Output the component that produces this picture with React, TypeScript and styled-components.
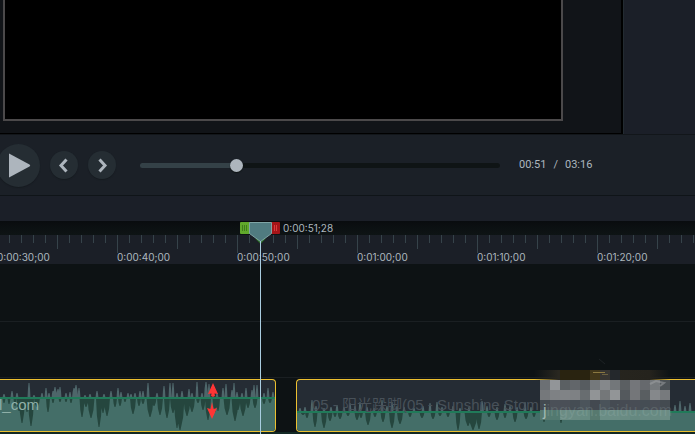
import React, { useState } from "react";
import styled, { createGlobalStyle } from "styled-components";

const GlobalStyle = createGlobalStyle`
  *, *::before, *::after { box-sizing: border-box; }
  body { margin: 0; background: #0d1214; overflow: hidden; }
`;

const Editor = styled.div`
  display: flex;
  flex-direction: column;
  height: 100vh;
  overflow: hidden;
  color: #adb7bf;
  background: #1b1f27;
  font-family: Inter, "Liberation Sans", sans-serif;
`;

const Stage = styled.section`
  display: grid;
  grid-template-columns: 1fr 72px;
`;

const Preview = styled.div`
  display: flex;
  padding: 0 58px 12px 3px;
  background: #111418;
  border-right: 2px solid #000;
  border-bottom: 1px solid #000;
`;

const Canvas = styled.div`
  flex: 1;
  height: 121px;
  background: #000;
  border: 2px solid #4b494a;
  border-top: 0;
`;

const Properties = styled.aside`
  background: #1b1f28;
  border-left: 1px solid #232b31;
`;

const Transport = styled.section`
  display: flex;
  align-items: center;
  height: 62px;
  background: #1b2027;
  border-top: 1px solid #12161a;
  border-bottom: 1px solid #0f1418;
`;

const RoundButton = styled.button<{ $size: number }>`
  display: grid;
  place-items: center;
  flex: none;
  width: ${(p) => p.$size}px;
  height: ${(p) => p.$size}px;
  padding: 0;
  border: 0;
  border-radius: 50%;
  background: #252d33;
  box-shadow: 0 1px 1px #161b20;
  cursor: pointer;
`;

const Buttons = styled.div`
  display: flex;
  align-items: center;
  gap: 10px;
  margin-left: -3px;
`;

const Scrubber = styled.input<{ $fill: number }>`
  appearance: none;
  flex: 1;
  min-width: 0;
  height: 13px;
  margin: 0 19px 0 24px;
  background: transparent;
  cursor: pointer;

  &::-webkit-slider-runnable-track {
    height: 5px;
    border-radius: 3px;
    background: linear-gradient(
      to right,
      #344147 ${(p) => p.$fill}%,
      #0f1415 ${(p) => p.$fill}%
    );
  }

  &::-webkit-slider-thumb {
    appearance: none;
    width: 13px;
    height: 13px;
    margin-top: -4px;
    border: 0;
    border-radius: 50%;
    background: #adb5bd;
    box-shadow: 0 1px 1px #0f1415;
  }
`;

const Clock = styled.div`
  display: flex;
  gap: 7px;
  width: 176px;
  font: 11px/16px Roboto, sans-serif;
`;

const Toolbar = styled.div`
  height: 25px;
  background: #1b1f28;
`;

const Timeline = styled.section`
  position: relative;
  display: flex;
  flex-direction: column;
  flex: 1;
  background: #0d1214;
`;

const ScrubLane = styled.div`
  height: 14px;
  background: linear-gradient(#090c0f, #0e1415);
`;

const Ruler = styled.div`
  display: flex;
  height: 29px;
  margin: 0 0 2px -3px;
  overflow: hidden;
  background: #1b1f27;
`;

const Segment = styled.div`
  position: relative;
  display: flex;
  flex: none;
  width: 120px;
`;

const Tick = styled.i<{ $length: number }>`
  width: 12px;
  height: ${(p) => p.$length}px;
  border-left: 1px solid #36434a;
`;

const Timecode = styled.span`
  font-size: 10px;
  line-height: 12px;
  white-space: nowrap;
`;

const SegmentLabel = styled(Timecode)`
  position: absolute;
  left: 0;
  bottom: 1px;
`;

const EmptyTrack = styled.div`
  height: 56px;
  border-bottom: 1px solid #1a1f22;
`;

const AudioTrack = styled.div`
  position: relative;
  display: flex;
  gap: 20px;
  flex: 1;
  align-items: flex-start;
  padding-top: 1px;
  background: linear-gradient(#0d1214 54px, #132824 54px);
`;

const Clip = styled.div<{ $first?: boolean }>`
  position: relative;
  flex: ${(p) => (p.$first ? "none" : "1")};
  width: ${(p) => (p.$first ? "276px" : "auto")};
  height: 53px;
  overflow: hidden;
  border: 1px solid #ecc030;
  border-left-width: ${(p) => (p.$first ? 0 : 1)}px;
  border-right-width: ${(p) => (p.$first ? 1 : 0)}px;
  border-radius: ${(p) => (p.$first ? "0 4px 4px 0" : "4px 0 0 4px")};
  background: #252c34;
`;

const Wave = styled.svg`
  display: block;
  width: 100%;
  height: 51px;
`;

const ClipName = styled.span<{ $inset: number; $tone: string }>`
  position: absolute;
  left: ${(p) => p.$inset}px;
  top: 16px;
  color: ${(p) => p.$tone};
  font: 15px/18px "Liberation Sans", "Noto Sans CJK SC", sans-serif;
  white-space: nowrap;
`;

const Arrows = styled.svg`
  position: absolute;
  left: 206px;
  top: 3px;
`;

const Censor = styled.svg`
  position: absolute;
  left: 530px;
  top: -20px;
  font: 16px "Liberation Sans", sans-serif;
`;

const Playhead = styled.div`
  position: absolute;
  top: 1px;
  bottom: 0;
  left: 240px;
  display: flex;
  gap: 3px;

  &::before {
    content: "";
    position: absolute;
    left: 20px;
    top: 19px;
    bottom: 0;
    width: 1px;
    background: #a9cde0;
  }
`;

type Spike = [x: number, size: number, width?: number];

const CLIP_A_UP: Spike[] = [
  [4, 4], [12, 7], [17, 5], [29, 15], [34, 3], [42, 5], [46, 10], [49, 5], [53, 7], [55, 11, 4], [58, 9, 4],
  [60, 11, 3], [66, 5], [70, 6], [74, 10, 4], [76, 13, 4], [79, 10, 3], [85, 3], [90, 4], [97, 7], [104, 4],
  [111, 7], [118, 10], [121, 6], [128, 5], [131, 4], [135, 5], [140, 7], [143, 7], [148, 15], [157, 5],
  [164, 12], [170, 15], [173, 15], [177, 5], [182, 7], [189, 9], [192, 5], [197, 16], [202, 5], [206, 16, 4],
  [209, 14, 3], [217, 5], [223, 10], [226, 14], [232, 8], [234, 15], [237, 6], [242, 5], [246, 10], [252, 8],
  [254, 13], [257, 13], [264, 5], [268, 10], [273, 6],
];
const CLIP_A_DOWN: Spike[] = [
  [4, 5], [9, 6], [15, 8], [19, 13, 5], [22, 25, 6], [27, 14, 5], [31, 28, 6], [37, 9, 6], [48, 14, 4],
  [53, 5], [60, 4], [66, 4], [71, 5], [82, 19, 5], [86, 9, 5], [91, 20, 7], [99, 29, 6], [103, 15, 5],
  [107, 18, 6], [115, 9, 4], [120, 8, 4], [125, 4], [133, 16, 6], [139, 8, 4], [143, 6, 4], [150, 19, 7],
  [154, 8, 5], [160, 17, 6], [167, 20, 6], [173, 15, 6], [177, 30, 6], [180, 32, 9], [187, 18, 7],
  [192, 14, 6], [198, 5, 4], [203, 12, 5], [208, 22, 6], [215, 14, 5], [218, 13, 4], [227, 17, 7],
  [235, 23, 7], [238, 12, 5], [243, 18, 7], [248, 10, 5], [255, 10, 5], [264, 6, 4], [270, 5, 4],
];
const CLIP_B_UP: Spike[] = [
  [3, 4], [8, 5], [15, 12], [19, 6], [27, 4], [34, 5], [40, 7], [47, 5], [53, 9], [58, 6], [63, 10],
  [70, 5], [77, 4], [85, 12], [90, 6], [95, 10], [100, 6], [107, 5], [117, 4], [126, 6], [133, 9], [140, 10],
  [145, 5], [156, 6], [163, 4], [172, 5], [185, 11, 4], [190, 6], [200, 5], [208, 8], [213, 6], [220, 5],
  [228, 10], [234, 5], [378, 7], [383, 11], [388, 6], [393, 9],
];
const CLIP_B_DOWN: Spike[] = [
  [6, 3, 5], [10, 6, 4], [18, 15, 5], [27, 16, 6], [33, 9, 5], [38, 5, 4], [43, 7, 5], [51, 4, 4],
  [60, 8, 5], [64, 6, 4], [71, 13, 6], [78, 5, 4], [86, 10, 5], [95, 16, 6], [103, 12, 6], [113, 5, 4],
  [125, 6, 5], [136, 7, 5], [143, 4, 4], [151, 5, 4], [161, 18, 5], [171, 14, 7], [176, 18, 9],
  [182, 17, 6], [192, 5, 4], [200, 8, 5], [208, 6, 4], [218, 10, 5], [229, 7, 5], [237, 5, 4],
  [247, 10, 4], [264, 11, 4],
];

const spikePath = (spikes: Spike[], base: number, direction: 1 | -1) =>
  spikes
    .map(([x, size, width = 3]) => {
      const tip = base + direction * size;
      const shoulder = base + direction * size * 0.6;
      const half = width / 2;
      return `M${x - half} ${base}L${x - half * 0.7} ${shoulder}L${x - 0.5} ${tip}H${x + 0.5}L${x + half * 0.7} ${shoulder}L${x + half} ${base}Z`;
    })
    .join("");

function Waveform({ base, up, down }: { base: number; up: Spike[]; down: Spike[] }) {
  return (
    <Wave aria-hidden="true">
      <rect y={base} width="100%" height="60" fill="#446e68" />
      <path d={spikePath(up, base, -1)} fill="#4e666a" />
      <path d={spikePath(down, base, 1)} fill="#25463e" />
      <rect y={base - 1} width="100%" height="2" fill="#207a59" />
    </Wave>
  );
}

const MOSAIC: string[][] = [
  "#6c7074 #929598 #5b6063 #62666a #575c60 #75797c #85888b #73777a #5b5f62 #74767a #66696d #75797c #4c5256".split(" "),
  "#75787b #7e8184 #808386 #7e8184 #686d70 #919496 #747779 #929597 #54595d #747679 #595e61 #85888b #777a7d".split(" "),
  "#434950 #4b5058 #4a4f57 #454d54 #4b545b #434950 #4a535a #454b52 #464b53 #484d55 #454d54 #494e56 #444b51".split(" "),
  "#57796f #527970 #6b8c84 #698b83 #668a81 #57796f #6a8d85 #6b8d85 #698b83 #658880 #688a83 #678a82 #6b8c84".split(" "),
];

function CensorBlock() {
  return (
    <Censor width="150" height="62">
      <defs>
        <linearGradient id="edge" x1="0" x2="1">
          <stop offset="0" stopColor="#292720" stopOpacity="0" />
          <stop offset="0.18" stopColor="#292720" />
          <stop offset="0.85" stopColor="#25231d" />
          <stop offset="1" stopColor="#25231d" stopOpacity="0" />
        </linearGradient>
      </defs>
      <rect x="4" y="12" width="136" height="11" fill="url(#edge)" />
      <rect x="30" y="12" width="30" height="10" fill="#292310" />
      <rect x="60" y="12" width="10" height="10" fill="#42371a" />
      <rect x="70" y="12" width="10" height="10" fill="#373532" />
      <rect x="80" y="12" width="10" height="10" fill="#24282c" />
      <path d="M63 14.500H75" stroke="#8b7840" />
      <path d="M72 16.500H78" stroke="#6b6041" />
      <path d="M69 1L75 6" stroke="#1d2225" />
      {MOSAIC.map((row, y) =>
        row.map((fill, x) => (
          <rect key={`${x}-${y}`} x={10 + x * 10} y={22 + y * 10} width="10" height="10" fill={fill} />
        ))
      )}
      <path d="M120 26L126 23L134 25L130 28" fill="none" stroke="#a1a4a6" strokeWidth="2" opacity="0.5" />
      <text x="13" y="58" fill="#b4cac5" fillOpacity="0.18">
        <tspan fillOpacity="0.8">j</tspan>ingyan.baidu.com
      </text>
    </Censor>
  );
}

const SEGMENTS = ["0:00:30;00", "0:00:40;00", "0:00:50;00", "0:01:00;00", "0:01:10;00", "0:01:20;00"];
const TICKS = [18, 8, 8, 8, 8, 14, 8, 8, 8, 8];
const DURATION = 196;

const formatTime = (seconds: number) =>
  `${String(Math.floor(seconds / 60)).padStart(2, "0")}:${String(seconds % 60).padStart(2, "0")}`;

export default function App() {
  const [position, setPosition] = useState(51);

  return (
    <Editor>
      <GlobalStyle />
      <Stage>
        <Preview>
          <Canvas />
        </Preview>
        <Properties />
      </Stage>

      <Transport>
        <Buttons>
          <RoundButton $size={43} aria-label="Play">
            <svg width="43" height="43" fill="#adb5bd">
              <path d="M12 9.500L32.500 20.500Q34 21.500 32.500 22.500L12 33.500Z" />
            </svg>
          </RoundButton>
          <RoundButton $size={28} aria-label="Previous frame">
            <svg width="28" height="28" fill="none" stroke="#adb5bd" strokeWidth="3">
              <path d="M16.500 8.500L11 14.500L16.500 20.500" />
            </svg>
          </RoundButton>
          <RoundButton $size={28} aria-label="Next frame">
            <svg width="28" height="28" fill="none" stroke="#adb5bd" strokeWidth="3">
              <path d="M11.500 8.500L17 14.500L11.500 20.500" />
            </svg>
          </RoundButton>
        </Buttons>
        <Scrubber
          type="range"
          aria-label="Playback position"
          min={0}
          max={DURATION}
          value={position}
          $fill={(position / DURATION) * 100}
          onChange={(e) => setPosition(Number(e.target.value))}
        />
        <Clock>
          <span>{formatTime(position)}</span>
          <span>/</span>
          <span>{formatTime(DURATION)}</span>
        </Clock>
      </Transport>

      <Toolbar />

      <Timeline>
        <ScrubLane />
        <Ruler>
          {SEGMENTS.map((label) => (
            <Segment key={label}>
              {TICKS.map((length, i) => (
                <Tick key={i} $length={length} />
              ))}
              <SegmentLabel>{label}</SegmentLabel>
            </Segment>
          ))}
        </Ruler>
        <EmptyTrack />
        <EmptyTrack />
        <AudioTrack>
          <Clip $first>
            <Waveform base={18} up={CLIP_A_UP} down={CLIP_A_DOWN} />
            <ClipName $inset={-1} $tone="#8fb0a8">l_com</ClipName>
            <Arrows width="14" height="38" fill="#ff3535" aria-hidden="true">
              <path d="M7 0L12 11L8.500 10.500L9 13L7 14L5 13L5.500 10.500L2 11Z" />
              <path d="M6 19L7.500 26L11 25L6 36L1 25L4.500 26Z" />
            </Arrows>
          </Clip>
          <Clip>
            <Waveform base={32} up={CLIP_B_UP} down={CLIP_B_DOWN} />
            <ClipName $inset={15} $tone="#485159">05 - 阳光跺脚(05 - Sunshine Stom</ClipName>
          </Clip>
          <CensorBlock />
        </AudioTrack>

        <Playhead>
          <svg width="40" height="22" aria-hidden="true">
            <rect x="0" y="0" width="12" height="12" rx="1" fill="#61a92b" />
            <path d="M2.500 3V9M4.500 3V9M6.500 3V9" stroke="#3f7d1c" />
            <path d="M16 16L20.500 20.500L25 16" fill="none" stroke="#2b6a25" strokeWidth="2" />
            <rect x="30" y="0" width="10" height="12" rx="1" fill="#a51418" />
            <path d="M34.500 3V9M36.500 3V9" stroke="#da3a3d" />
            <path d="M9.500 0.500H31.500V11.500L20.500 19.500L9.500 11.500Z" fill="#507b80" stroke="#7fa4a5" />
          </svg>
          <Timecode>0:00:51;28</Timecode>
        </Playhead>
      </Timeline>
    </Editor>
  );
}
